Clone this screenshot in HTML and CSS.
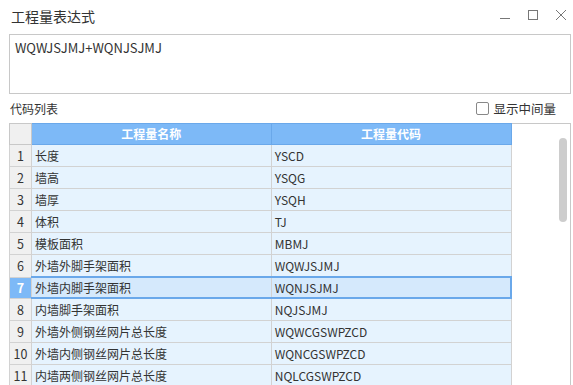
FILE: index.html
```html
<!DOCTYPE html>
<html lang="zh-CN">
<head>
  <meta charset="UTF-8">
  <title>工程量表达式</title>
  <link rel="stylesheet" href="styles.css">
</head>
<body>

  <div class="window">
    <!-- Title bar -->
    <div class="titlebar">
      <span class="title">工程量表达式</span>
      <div class="controls">
        <svg width="12" height="12" viewBox="0 0 12 12"><path d="M1 9.5h10" stroke="#777" stroke-width="1" fill="none"/></svg>
        <svg width="12" height="12" viewBox="0 0 12 12"><rect x="1.5" y="1.5" width="9" height="9" stroke="#777" stroke-width="1" fill="none"/></svg>
        <svg width="12" height="12" viewBox="0 0 12 12"><path d="M1 1L11 11M11 1L1 11" stroke="#777" stroke-width="1" fill="none"/></svg>
      </div>
    </div>

    <!-- Expression -->
    <div class="expr">WQWJSJMJ+WQNJSJMJ</div>

    <div class="list-head">
      <span>代码列表</span>
      <label class="check"><span class="box"></span>显示中间量</label>
    </div>

    <!-- Code list -->
    <div class="grid-wrap">
      <table class="grid">
        <thead>
          <tr>
            <th class="num"></th>
            <th>工程量名称</th>
            <th>工程量代码</th>
          </tr>
        </thead>
        <tbody>
          <tr><td class="num">1</td><td>长度</td><td>YSCD</td></tr>
          <tr><td class="num">2</td><td>墙高</td><td>YSQG</td></tr>
          <tr><td class="num">3</td><td>墙厚</td><td>YSQH</td></tr>
          <tr><td class="num">4</td><td>体积</td><td>TJ</td></tr>
          <tr><td class="num">5</td><td>模板面积</td><td>MBMJ</td></tr>
          <tr><td class="num">6</td><td>外墙外脚手架面积</td><td>WQWJSJMJ</td></tr>
          <tr class="selected"><td class="num">7</td><td>外墙内脚手架面积</td><td>WQNJSJMJ</td></tr>
          <tr><td class="num">8</td><td>内墙脚手架面积</td><td>NQJSJMJ</td></tr>
          <tr><td class="num">9</td><td>外墙外侧钢丝网片总长度</td><td>WQWCGSWPZCD</td></tr>
          <tr><td class="num">10</td><td>外墙内侧钢丝网片总长度</td><td>WQNCGSWPZCD</td></tr>
          <tr><td class="num">11</td><td>内墙两侧钢丝网片总长度</td><td>NQLCGSWPZCD</td></tr>
          <tr><td class="num">12</td><td>超高体积</td><td>CGTJ</td></tr>
        </tbody>
      </table>
      <div class="scroll"><div class="thumb"></div></div>
    </div>
  </div>

</body>
</html>
```

FILE: styles.css
```css
html, body {
  margin: 0;
  padding: 0;
  background: #fff;
  overflow: hidden;
}
body {
  font-family: "Noto Sans CJK SC", "Noto Sans", sans-serif;
  color: #333;
  font-size: 12px;
}
.window {
  width: 573px;
  height: 385px;
  padding: 0 2px 0 9px;
  box-sizing: border-box;
}
.titlebar {
  height: 34px;
  display: flex;
  align-items: center;
  justify-content: space-between;
  margin-left: 2px;
}
.title {
  font-size: 14px;
  color: #333;
  margin-top: -3px;
}
.controls {
  display: flex;
  gap: 16px;
  margin-right: 4px;
  margin-top: -4px;
}
.controls svg { display: block; }
.expr {
  height: 60px;
  border: 1px solid #c8c8c8;
  padding: 4px 5px;
  box-sizing: border-box;
  font-size: 13px;
  line-height: 18px;
}
.list-head {
  height: 29px;
  display: flex;
  align-items: center;
  justify-content: space-between;
  font-size: 12px;
  padding-left: 1px;
}
.check {
  display: flex;
  align-items: center;
  gap: 4px;
  margin-right: 15px;
  font-size: 12.5px;
}
.box {
  width: 11px;
  height: 11px;
  border: 1px solid #888;
  border-radius: 2px;
  background: #fff;
}
.grid-wrap {
  display: flex;
  align-items: flex-start;
  border: 1px solid #c8c8c8;
  border-bottom: none;
  height: 300px;
}
.grid {
  border-collapse: collapse;
  table-layout: fixed;
  width: 503px;
  margin: -1px 0 0 -1px;
  font-size: 12px;
}
.grid th, .grid td {
  padding: 0 3px;
  line-height: 21px;
  white-space: nowrap;
  overflow: hidden;
}
.grid th {
  line-height: 20px;
  background: #7db9f7;
  color: #fff;
  font-weight: bold;
  border: 1px solid #6aa8ea;
  text-align: center;
}
.grid th.num {
  width: 21px;
  padding: 0;
  background: #f0f0f0;
  border-color: #c8c8c8;
}
.grid td {
  background: #e6f3fe;
  border: 1px solid #d2d2d2;
  text-align: left;
}
.grid td.num {
  background: #f0f0f0;
  text-align: center;
  padding: 0;
  font-size: 12.5px;
}
.grid tr.selected td {
  line-height: 19px;
  background: #d5e9fc;
  border-top: 2px solid #6aa8ea;
  border-bottom: 2px solid #6aa8ea;
}
.grid tr.selected td:last-child {
  border-right: 2px solid #6aa8ea;
}
.grid tr.selected td.num {
  background: #7db9f7;
  color: #fff;
  font-weight: bold;
  border-top: 1px solid #d2d2d2;
  border-bottom: 1px solid #d2d2d2;
}
.scroll {
  flex: 1;
  display: flex;
  justify-content: flex-end;
}
.thumb {
  width: 8px;
  height: 84px;
  margin: 14px 3px 0 0;
  background: #cdcdcd;
  border-radius: 4px;
}
```
